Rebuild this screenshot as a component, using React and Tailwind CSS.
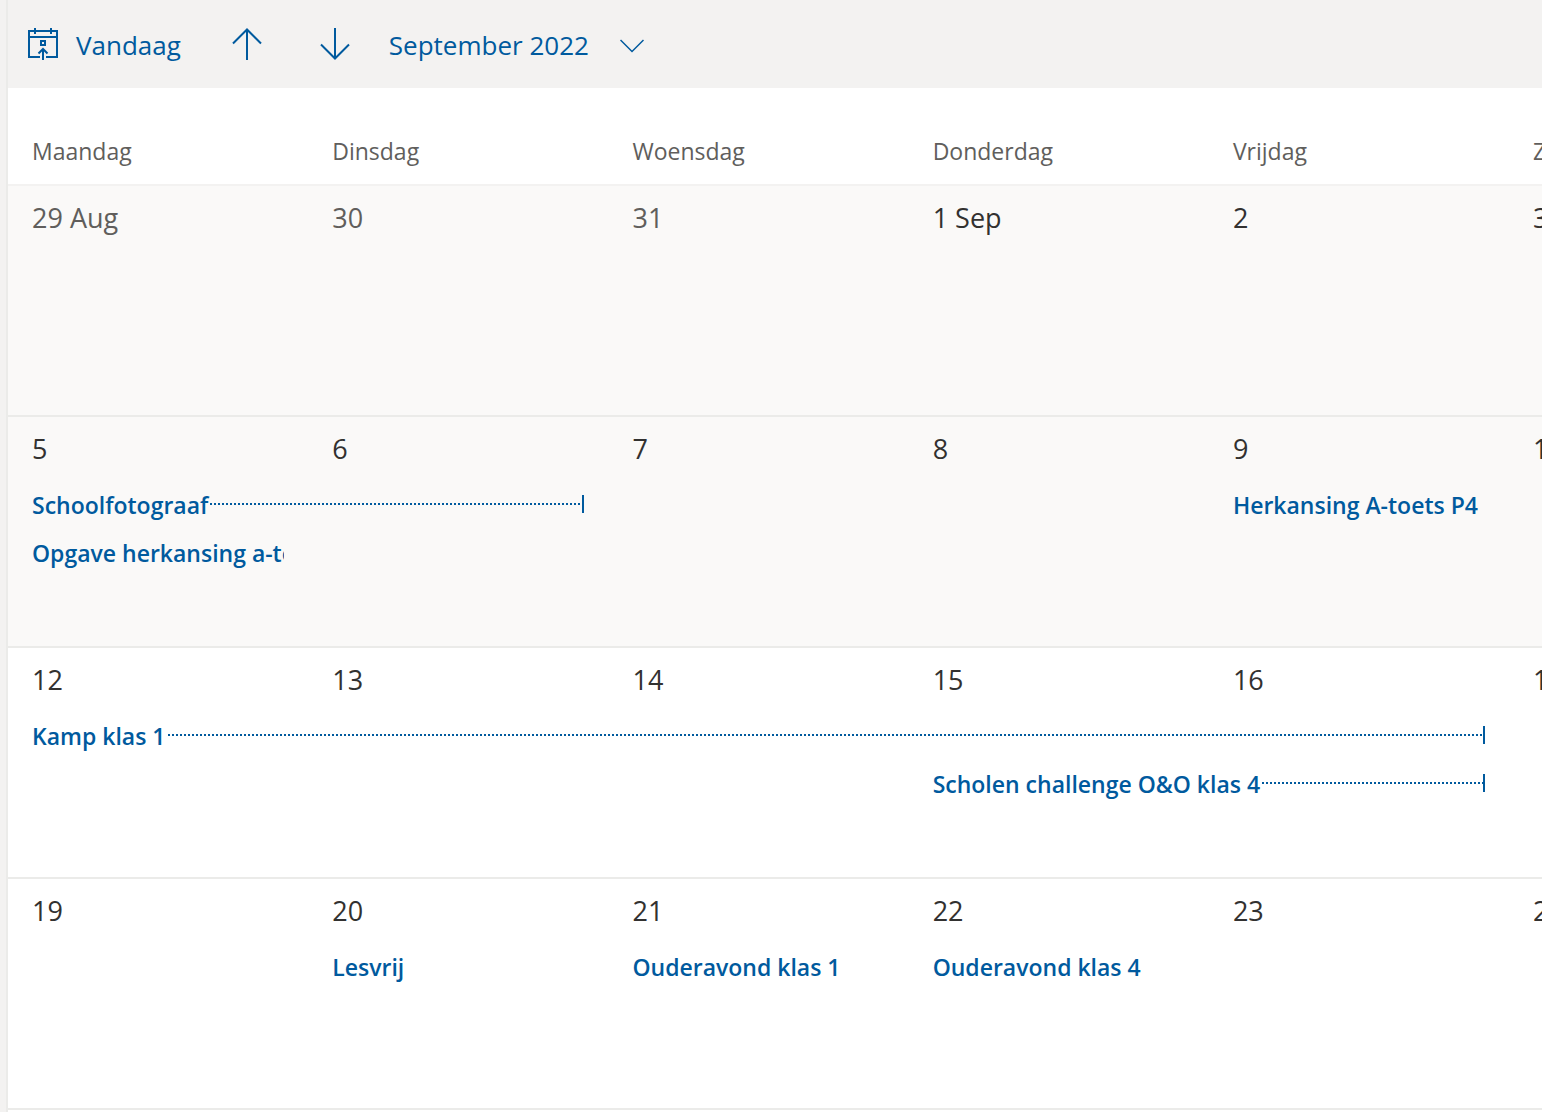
const weekdays = ["Maandag", "Dinsdag", "Woensdag", "Donderdag", "Vrijdag", "Zaterdag", "Zondag"]

// each lane is one line of events; start is the weekday index, span the number of days
const weeks = [
  {
    days: ["29 Aug", "30", "31", "1 Sep", "2", "3", "4"],
    otherMonth: 3,
    past: true,
    lanes: [[], []],
  },
  {
    days: ["5", "6", "7", "8", "9", "10", "11"],
    past: true,
    lanes: [
      [
        { start: 0, span: 2, title: "Schoolfotograaf" },
        { start: 4, span: 1, title: "Herkansing A-toets P4" },
      ],
      [{ start: 0, span: 1, title: "Opgave herkansing a-toets" }],
    ],
  },
  {
    days: ["12", "13", "14", "15", "16", "17", "18"],
    lanes: [
      [{ start: 0, span: 5, title: "Kamp klas 1" }],
      [{ start: 3, span: 2, title: "Scholen challenge O&O klas 4" }],
    ],
  },
  {
    days: ["19", "20", "21", "22", "23", "24", "25"],
    lanes: [
      [
        { start: 1, span: 1, title: "Lesvrij" },
        { start: 2, span: 1, title: "Ouderavond klas 1" },
        { start: 3, span: 1, title: "Ouderavond klas 4" },
      ],
      [],
    ],
  },
]

function TodayIcon() {
  return (
    <svg width="32" height="32" viewBox="0 0 32 32" fill="none" stroke="currentColor" strokeWidth="2" aria-hidden="true">
      <path d="M13 29H2V3h28v26H19" />
      <path d="M2 9h28M8 0v6M24 0v6" />
      <path d="M14 13h4v4h-4z" />
      <path d="M16 32V21M11.500 25.500l4.500-4.500 4.500 4.500" />
    </svg>
  )
}

function ArrowUp() {
  return (
    <svg width="32" height="32" viewBox="0 0 32 32" fill="none" stroke="currentColor" strokeWidth="2" aria-hidden="true">
      <path d="M16 32V2M2 15.500l14-14 14 14" />
    </svg>
  )
}

function ArrowDown() {
  return (
    <svg width="32" height="32" viewBox="0 0 32 32" fill="none" stroke="currentColor" strokeWidth="2" aria-hidden="true">
      <path d="M16 0v30M2 16.500l14 14 14-14" />
    </svg>
  )
}

function ChevronDown() {
  return (
    <svg className="mt-1" width="24" height="14" viewBox="0 0 24 14" fill="none" stroke="currentColor" strokeWidth="1.5" aria-hidden="true">
      <path d="M.5 1L12 12.500 23.500 1" />
    </svg>
  )
}

function Toolbar() {
  return (
    <header className="flex h-[88px] items-center bg-[#f3f2f1] pl-[19px] text-[26px] text-[#005a9e]">
      <button className="flex items-center gap-[17px]">
        <TodayIcon />
        <span className="pt-0.5">Vandaag</span>
      </button>
      <button className="ml-[50px]" aria-label="Vorige maand">
        <ArrowUp />
      </button>
      <button className="ml-14" aria-label="Volgende maand">
        <ArrowDown />
      </button>
      <button className="ml-[38px] flex items-center gap-[31px]">
        <span className="pt-0.5">September 2022</span>
        <ChevronDown />
      </button>
    </header>
  )
}

function Event({ event }) {
  return (
    <button className="flex h-12 w-full items-center overflow-hidden text-left text-[23px] font-semibold whitespace-nowrap text-[#005a9e]">
      <span className="pt-[3px]">{event.title}</span>
      {event.span > 1 && (
        <>
          <span className="ml-0.5 h-0.5 flex-1 bg-[repeating-linear-gradient(90deg,#005a9e_0_2px,transparent_2px_4px)]" />
          <span className="h-[18px] w-0.5 bg-[#005a9e]" />
        </>
      )}
    </button>
  )
}

function Lane({ events }) {
  const cells = []
  for (let day = 0; day < 7; ) {
    const event = events.find((e) => e.start === day)
    const span = event ? event.span : 1
    cells.push(
      <td key={day} colSpan={span} className="h-12 px-6">
        {event && <Event event={event} />}
      </td>
    )
    day += span
  }
  return <tr>{cells}</tr>
}

function Week({ week, first }) {
  return (
    <tbody className={week.past ? "bg-[#faf9f8]" : "bg-white"}>
      <tr>
        {week.days.map((day, i) => (
          <td
            key={day}
            className={`h-[65px] border-t-2 px-6 pt-0.5 text-[27px] ${first ? "border-[#f3f2f1]" : "border-[#ebebe9]"} ${
              i < week.otherMonth ? "text-[#605e5c]" : "text-[#323130]"
            }`}
          >
            {day}
          </td>
        ))}
      </tr>
      {week.lanes.map((events, i) => (
        <Lane key={i} events={events} />
      ))}
      <tr>
        <td colSpan={7} className="h-[70px]" />
      </tr>
    </tbody>
  )
}

export default function App() {
  return (
    <div className="flex h-screen overflow-hidden bg-[#f3f2f1] pl-1.5 font-['Open_Sans','Noto_Sans',sans-serif]">
      <main className="min-w-0 flex-1 overflow-hidden border-l-2 border-[#ebebe9] bg-white">
        <Toolbar />
        <table className="w-[137%] table-fixed border-separate border-spacing-0 border-b-2 border-[#ebebe9]">
          <thead>
            <tr>
              {weekdays.map((day) => (
                <th key={day} className="h-24 px-6 pt-[30px] text-left text-[23px] font-normal text-[#605e5c]">
                  {day}
                </th>
              ))}
            </tr>
          </thead>
          {weeks.map((week, i) => (
            <Week key={week.days[0]} week={week} first={i === 0} />
          ))}
        </table>
      </main>
    </div>
  )
}
